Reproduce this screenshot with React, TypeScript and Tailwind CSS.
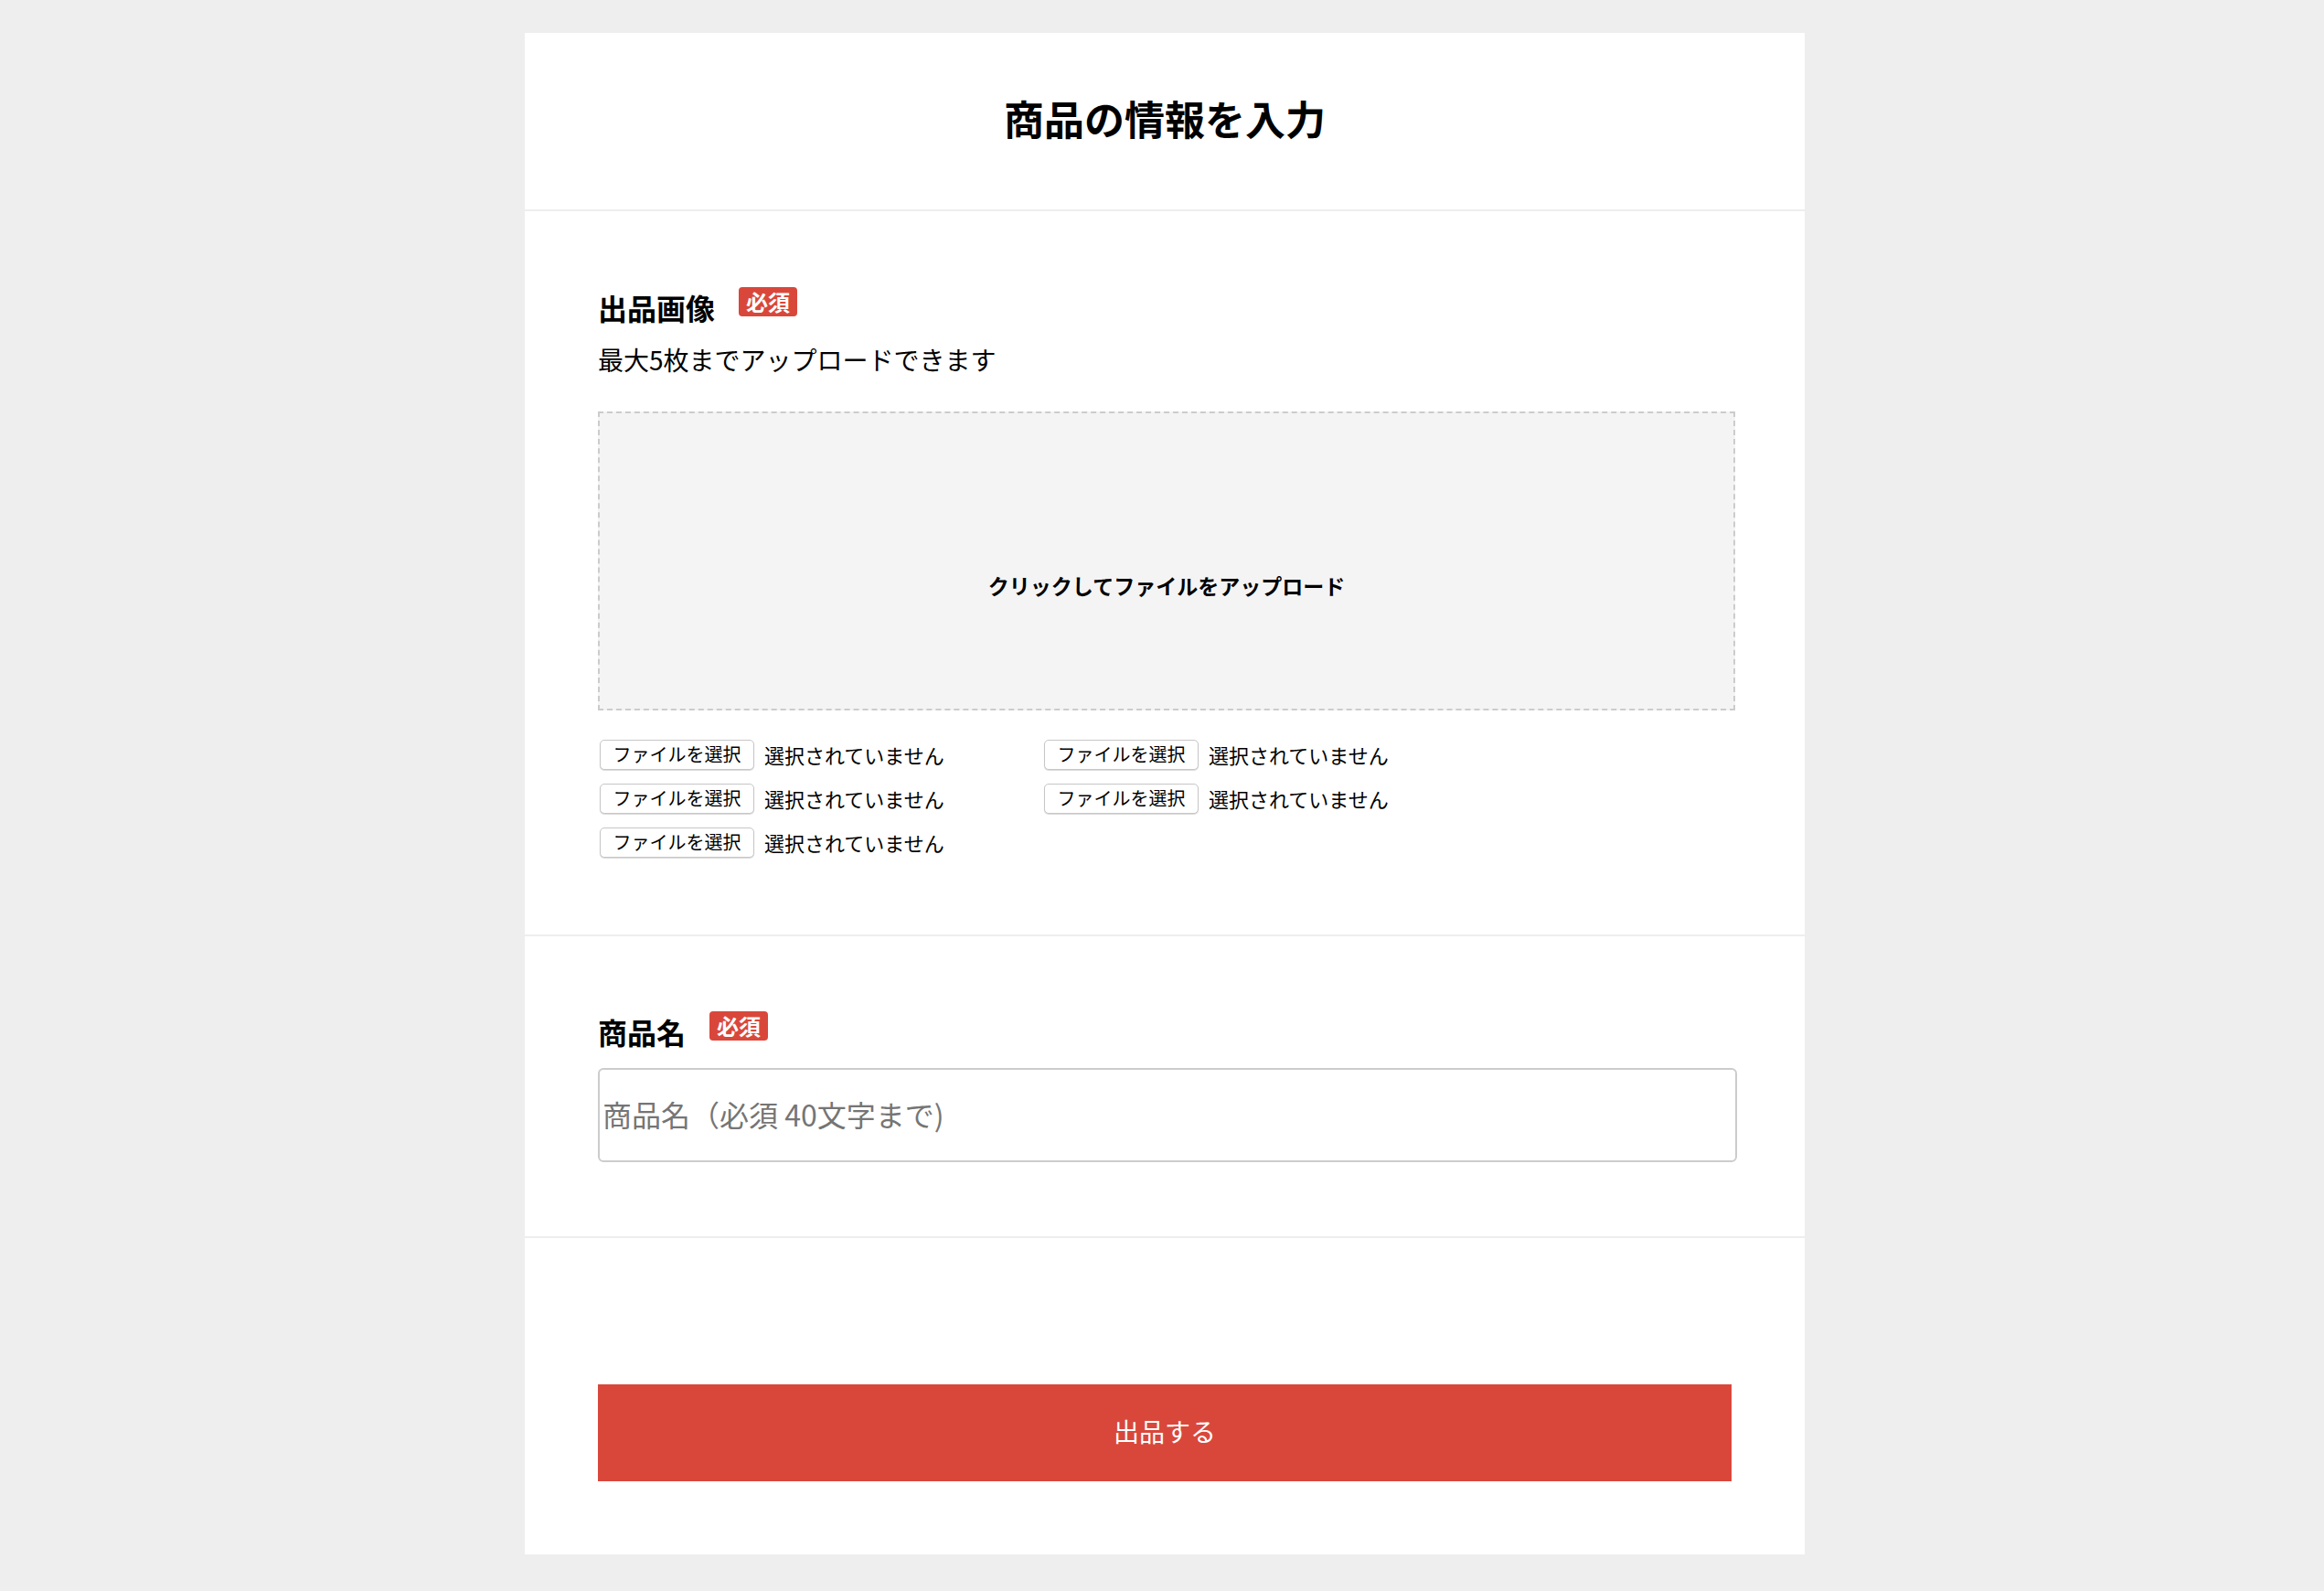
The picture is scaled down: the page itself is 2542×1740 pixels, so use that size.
import React from "react";

function Badge() {
  return (
    <span className="ml-[26px] mt-[2px] inline-flex h-[32px] items-center rounded-[4px] bg-[#d9473b] px-[8px] text-[24px] font-bold leading-[32px] text-white">
      必須
    </span>
  );
}

function FileField() {
  return (
    <div className="flex h-[33px] w-[486px] items-center">
      <button
        type="button"
        className="flex h-[33px] w-[169px] items-center justify-center rounded-[5px] border border-[#c6c6c6] bg-white pb-[1px] text-[20px] leading-none text-black shadow-[0_1px_1px_rgba(0,0,0,0.15)]"
      >
        ファイルを選択
      </button>
      <span className="ml-[11px] pb-[2px] text-[22px] leading-none text-black">選択されていません</span>
    </div>
  );
}

export default function App() {
  return (
    <div className="min-h-screen bg-[#eeeeee] pb-[40px] pt-[36px] font-['Noto_Sans_CJK_JP','Noto_Sans_CJK_SC',sans-serif] text-black">
      <div className="ml-[574px] w-[1400px] bg-white">
        <div className="flex h-[195px] items-center justify-center border-b-2 border-[#eeeeee] pb-[8px]">
          <h1 className="text-[44px] font-bold leading-none">商品の情報を入力</h1>
        </div>

        <div className="border-b-2 border-[#eeeeee] px-[80px] pb-[84px] pt-[81px]">
          <div className="flex h-[48px] items-start">
            <span className="text-[32px] font-bold leading-[48px]">出品画像</span>
            <Badge />
          </div>
          <p className="mt-[12px] text-[28px] leading-[43px]">最大5枚までアップロードできます</p>
          <div className="mt-[35px] flex h-[327px] w-[1244px] items-center justify-center border-2 border-dashed border-[#cccccc] bg-[#f4f4f4] pt-[54px]">
            <span className="text-[23px] font-bold leading-none">クリックしてファイルをアップロード</span>
          </div>
          <div className="mt-[32px] flex flex-wrap gap-y-[15px] pl-[2px]">
            <FileField />
            <FileField />
            <FileField />
            <FileField />
            <FileField />
          </div>
        </div>

        <div className="border-b-2 border-[#eeeeee] px-[80px] pb-[81px] pt-[80px]">
          <div className="flex h-[48px] items-start">
            <span className="text-[32px] font-bold leading-[48px]">商品名</span>
            <Badge />
          </div>
          <input
            type="text"
            placeholder="商品名（必須 40文字まで)"
            className="mt-[16px] block h-[103px] w-[1246px] rounded-[6px] border-2 border-[#cccccc] bg-white pb-[4px] pl-[3px] text-[32px] text-black outline-none placeholder:text-[#757575]"
          />
        </div>

        <div className="px-[80px] pb-[80px] pt-[160px]">
          <button
            type="button"
            className="flex h-[106px] w-full items-center justify-center bg-[#d9473b] pb-[4px] text-[28px] leading-none text-white"
          >
            出品する
          </button>
        </div>
      </div>
    </div>
  );
}
